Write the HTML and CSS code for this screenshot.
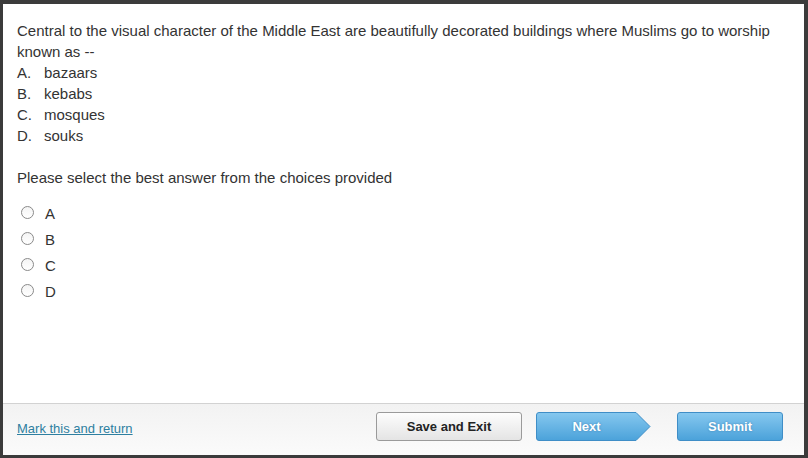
FILE: index.html
```html
<!DOCTYPE html>
<html>
<head>
<meta charset="utf-8">
<link rel="stylesheet" href="styles.css">
</head>
<body>
<div class="page">
  <main class="content">
    <div class="question">
      <p class="stem">Central to the visual character of the Middle East are beautifully decorated buildings where Muslims go to worship known as --</p>
      <ol class="choices">
        <li><span class="letter">A.</span>bazaars</li>
        <li><span class="letter">B.</span>kebabs</li>
        <li><span class="letter">C.</span>mosques</li>
        <li><span class="letter">D.</span>souks</li>
      </ol>
    </div>
    <p class="prompt">Please select the best answer from the choices provided</p>
    <div class="options">
      <label class="option"><span class="radio"></span><span class="opt-label">A</span></label>
      <label class="option"><span class="radio"></span><span class="opt-label">B</span></label>
      <label class="option"><span class="radio"></span><span class="opt-label">C</span></label>
      <label class="option"><span class="radio"></span><span class="opt-label">D</span></label>
    </div>
  </main>
  <footer class="footer">
    <a class="mark" href="#">Mark this and return</a>
    <div class="actions">
      <button class="btn btn-save">Save and Exit</button>
      <button class="btn-next">
        <svg class="next-shape" width="115" height="29" viewBox="0 0 115 29">
          <defs>
            <linearGradient id="ng" x1="0" y1="0" x2="0" y2="1">
              <stop offset="0" stop-color="#86c8ef"/>
              <stop offset="1" stop-color="#4ba2da"/>
            </linearGradient>
          </defs>
          <path d="M3 0.5 H100 L114 14.5 L100 28.5 H3 Q0.5 28.5 0.5 26 V3 Q0.5 0.5 3 0.5 Z" fill="url(#ng)" stroke="#3f8ec7" stroke-width="1"/>
        </svg>
        <span class="next-text">Next</span>
      </button>
      <button class="btn btn-submit">Submit</button>
    </div>
  </footer>
</div>
</body>
</html>
```

FILE: styles.css
```css
html, body {
  margin: 0;
  padding: 0;
  height: 100%;
}
body {
  background: #3b3b3b;
  padding: 4px 4px 3px 3px;
  box-sizing: border-box;
  font-family: "Liberation Sans", Arial, sans-serif;
}
.page {
  background: #fff;
  height: 100%;
  display: flex;
  flex-direction: column;
}
.content {
  flex: 1;
  padding: 16px 14px 0 14px;
  color: #333;
  font-size: 15px;
  line-height: 21px;
}
.stem {
  margin: 0;
}
.choices {
  list-style: none;
  margin: 0;
  padding: 0;
}
.letter {
  display: inline-block;
  width: 27px;
}
.prompt {
  margin: 21px 0 0 0;
}
.options {
  margin-top: 16px;
  display: flex;
  flex-direction: column;
  gap: 8px;
}
.option {
  display: flex;
  align-items: center;
  height: 18px;
}
.radio {
  width: 11px;
  height: 11px;
  border: 1px solid #8a8a8a;
  border-radius: 50%;
  background: linear-gradient(#f4f4f4, #fff);
  margin-left: 4px;
  margin-right: 11px;
  position: relative;
  top: -1px;
}
.opt-label {
  font-size: 15px;
  color: #333;
}
.footer {
  height: 51px;
  border-top: 1px solid #d2d2d2;
  background: linear-gradient(#f2f2f2, #fbfbfb);
  display: flex;
  align-items: flex-start;
  justify-content: space-between;
  padding: 0 21px 0 14px;
}
.mark {
  margin-top: 17px;
  font-size: 13px;
  color: #2e7fa0;
  text-decoration: underline;
}
.actions {
  display: flex;
  margin-top: 8px;
}
.btn {
  height: 29px;
  border-radius: 3px;
  font-family: "Liberation Sans", Arial, sans-serif;
  font-size: 13px;
  font-weight: bold;
  cursor: pointer;
  padding: 0;
}
.btn-save {
  width: 146px;
  border: 1px solid #9a9a9a;
  background: linear-gradient(#fdfdfd, #e4e4e4);
  color: #222;
}
.btn-next {
  position: relative;
  width: 115px;
  height: 29px;
  margin-left: 14px;
  border: none;
  background: none;
  padding: 0;
  font-family: "Liberation Sans", Arial, sans-serif;
  font-size: 13px;
  font-weight: bold;
  cursor: pointer;
}
.next-shape {
  position: absolute;
  left: 0;
  top: 0;
}
.next-text {
  position: relative;
  color: #fff;
  text-shadow: 0 0 2px #3a7fb0;
  margin-right: 14px;
}
.btn-submit {
  width: 106px;
  margin-left: 26px;
  border: 1px solid #3f8ec7;
  background: linear-gradient(#86c8ef, #4ba2da);
  color: #fff;
  text-shadow: 0 0 2px #3a7fb0;
}
```
